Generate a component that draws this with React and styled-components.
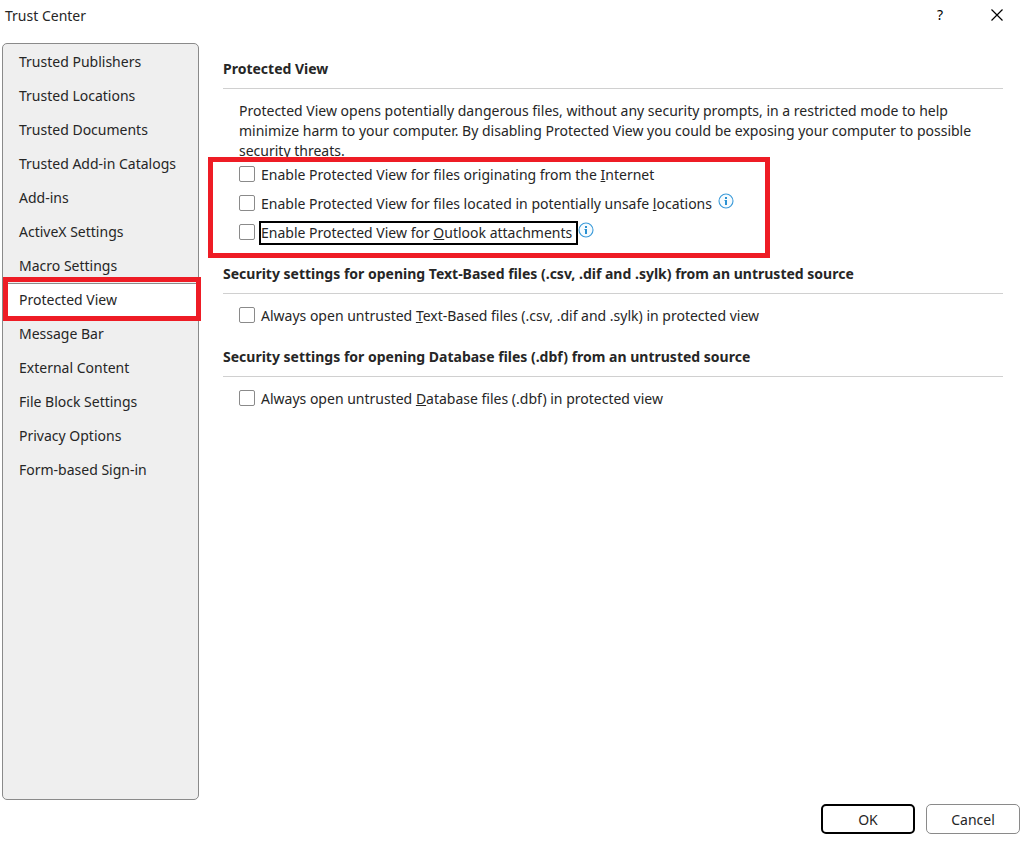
import React from "react";
import styled, { createGlobalStyle, css } from "styled-components";

const GlobalStyle = createGlobalStyle`
  *,
  *::before,
  *::after {
    box-sizing: border-box;
  }

  body {
    margin: 0;
    background-color: #ffffff;
    color: #262626;
    font-family: "Segoe UI", "Noto Sans", "Open Sans", sans-serif;
    font-size: 14px;
    line-height: 20px;
  }

  button {
    font: inherit;
    color: inherit;
  }
`;

const pages = [
  "Trusted Publishers",
  "Trusted Locations",
  "Trusted Documents",
  "Trusted Add-in Catalogs",
  "Add-ins",
  "ActiveX Settings",
  "Macro Settings",
  "Protected View",
  "Message Bar",
  "External Content",
  "File Block Settings",
  "Privacy Options",
  "Form-based Sign-in",
];

function InfoIcon() {
  return (
    <svg width="16" height="16" viewBox="0 0 16 16" aria-hidden="true">
      <circle cx="8" cy="8" r="7" fill="#f6fbfe" stroke="#3a9ad9" strokeWidth="1.1" />
      <path d="M7 4h2v2H7zM6.5 7H9v5H7V8h-.5z" fill="#2a91d2" />
    </svg>
  );
}

// `text` is split round its access key: [before, key, after]
function Option({ id, text, info, focused }) {
  const [before, key, after] = text;
  return (
    <OptionRow>
      <CheckBox type="checkbox" id={id} />
      <OptionLabel htmlFor={id} $focused={focused}>
        {before}
        <AccessKey>{key}</AccessKey>
        {after}
      </OptionLabel>
      {info && (
        <InfoButton type="button" aria-label="More information">
          <InfoIcon />
        </InfoButton>
      )}
    </OptionRow>
  );
}

function App() {
  const [current, setCurrent] = React.useState("Protected View");

  return (
    <Dialog>
      <GlobalStyle />
      <TitleBar>
        <Title>Trust Center</Title>
        <TitleButton type="button" aria-label="Help">
          ?
        </TitleButton>
        <TitleButton type="button" aria-label="Close">
          <svg width="12" height="12" viewBox="0 0 12 12" aria-hidden="true">
            <path d="M0.5 0.5l11 11M11.5 0.5l-11 11" stroke="#000000" strokeWidth="1.2" />
          </svg>
        </TitleButton>
      </TitleBar>

      <Body>
        <Sidebar>
          {pages.map((page) => (
            <SidebarItem
              key={page}
              type="button"
              $selected={page === current}
              onClick={() => setCurrent(page)}
            >
              {page}
            </SidebarItem>
          ))}
        </Sidebar>

        <Content>
          <Section>
            <SectionTitle>Protected View</SectionTitle>
            <Description>
              Protected View opens potentially dangerous files, without any security prompts, in a
              restricted mode to help minimize harm to your computer. By disabling Protected View
              you could be exposing your computer to possible security threats.
            </Description>
            <Options $marked>
              <Option
                id="internet"
                text={["Enable Protected View for files originating from the ", "I", "nternet"]}
              />
              <Option
                id="unsafe-locations"
                text={[
                  "Enable Protected View for files located in potentially unsafe ",
                  "l",
                  "ocations",
                ]}
                info
              />
              <Option
                id="outlook"
                text={["Enable Protected View for ", "O", "utlook attachments"]}
                info
                focused
              />
            </Options>
          </Section>

          <Section>
            <SectionTitle>
              Security settings for opening Text-Based files (.csv, .dif and .sylk) from an
              untrusted source
            </SectionTitle>
            <Options>
              <Option
                id="text-based"
                text={[
                  "Always open untrusted ",
                  "T",
                  "ext-Based files (.csv, .dif and .sylk) in protected view",
                ]}
              />
            </Options>
          </Section>

          <Section>
            <SectionTitle>
              Security settings for opening Database files (.dbf) from an untrusted source
            </SectionTitle>
            <Options>
              <Option
                id="database"
                text={["Always open untrusted ", "D", "atabase files (.dbf) in protected view"]}
              />
            </Options>
          </Section>
        </Content>
      </Body>

      <Footer>
        <FooterButton type="button" $primary>
          OK
        </FooterButton>
        <FooterButton type="button">Cancel</FooterButton>
      </Footer>
    </Dialog>
  );
}

const redFrame = css`
  content: "";
  position: absolute;
  border: 5px solid #ee1c25;
  pointer-events: none;
`;

const Dialog = styled.div`
  display: flex;
  flex-direction: column;
  min-height: 100vh;
`;

const TitleBar = styled.header`
  display: flex;
  align-items: flex-start;
  gap: 5px;
  padding: 0 0 11px 5px;
`;

const Title = styled.h1`
  flex: 1;
  margin: 0;
  font-size: 14px;
  font-weight: 400;
  line-height: 32px;
`;

const TitleButton = styled.button`
  display: flex;
  align-items: center;
  justify-content: center;
  width: 52px;
  height: 30px;
  padding: 0;
  border: 0;
  background: none;
  color: #000000;
`;

const Body = styled.div`
  display: flex;
  flex: 1;
`;

const Sidebar = styled.nav`
  display: flex;
  flex-direction: column;
  flex-shrink: 0;
  width: 197px;
  margin-left: 2px;
  padding-top: 1px;
  border: 1px solid #8a8a8a;
  border-radius: 5px;
  background-color: #efefef;
`;

const SidebarItem = styled.button`
  position: relative;
  height: 34px;
  padding: 0 16px;
  border: 0;
  background: none;
  text-align: left;
  white-space: nowrap;

  ${({ $selected }) =>
    $selected &&
    css`
      border: solid #8a8a8a;
      border-width: 1px 0;
      background-color: #ffffff;

      &::after {
        ${redFrame}
        inset: -7px -3px -5px 0;
      }
    `}
`;

const Content = styled.main`
  flex: 1;
  min-width: 0;
  padding: 16px 20px 0 24px;
`;

const Section = styled.section`
  & + & {
    margin-top: 17px;
  }
`;

const SectionTitle = styled.h2`
  margin: 0;
  padding-bottom: 9px;
  border-bottom: 1px solid #d0d0d0;
  font-size: 14px;
  font-weight: 700;
  line-height: 20px;
`;

const Description = styled.p`
  margin: 12px 0 -8px;
  padding: 0 16px;
`;

const Options = styled.div`
  position: relative;
  width: fit-content;
  margin: 7px 0 0 16px;

  ${({ $marked }) =>
    $marked &&
    css`
      &::after {
        ${redFrame}
        inset: -3px -36px -11px -31px;
      }
    `}
`;

const OptionRow = styled.div`
  display: flex;
  align-items: center;
  height: 29px;
`;

const CheckBox = styled.input`
  appearance: none;
  flex-shrink: 0;
  width: 16px;
  height: 16px;
  margin: 0 6px 2px 0;
  border: 1px solid #8a8a8a;
  border-radius: 2px;
  background-color: #ffffff;

  &:checked {
    background-color: #1e86cc;
  }
`;

const OptionLabel = styled.label`
  padding-right: 4px;
  white-space: nowrap;
  outline: ${({ $focused }) => ($focused ? "2px solid #000000" : "none")};
`;

const AccessKey = styled.span`
  text-decoration: underline;
`;

const InfoButton = styled.button`
  display: flex;
  margin: 0 0 6px 2px;
  padding: 0;
  border: 0;
  background: none;
`;

const Footer = styled.footer`
  display: flex;
  justify-content: flex-end;
  gap: 11px;
  padding: 4px 3px 7px;
`;

const FooterButton = styled.button`
  width: 94px;
  height: 30px;
  padding: 2px 0 0;
  border: ${({ $primary }) => ($primary ? "2px solid #000000" : "1px solid #8a8a8a")};
  border-radius: 5px;
  background-color: #ffffff;
`;

export default App;
